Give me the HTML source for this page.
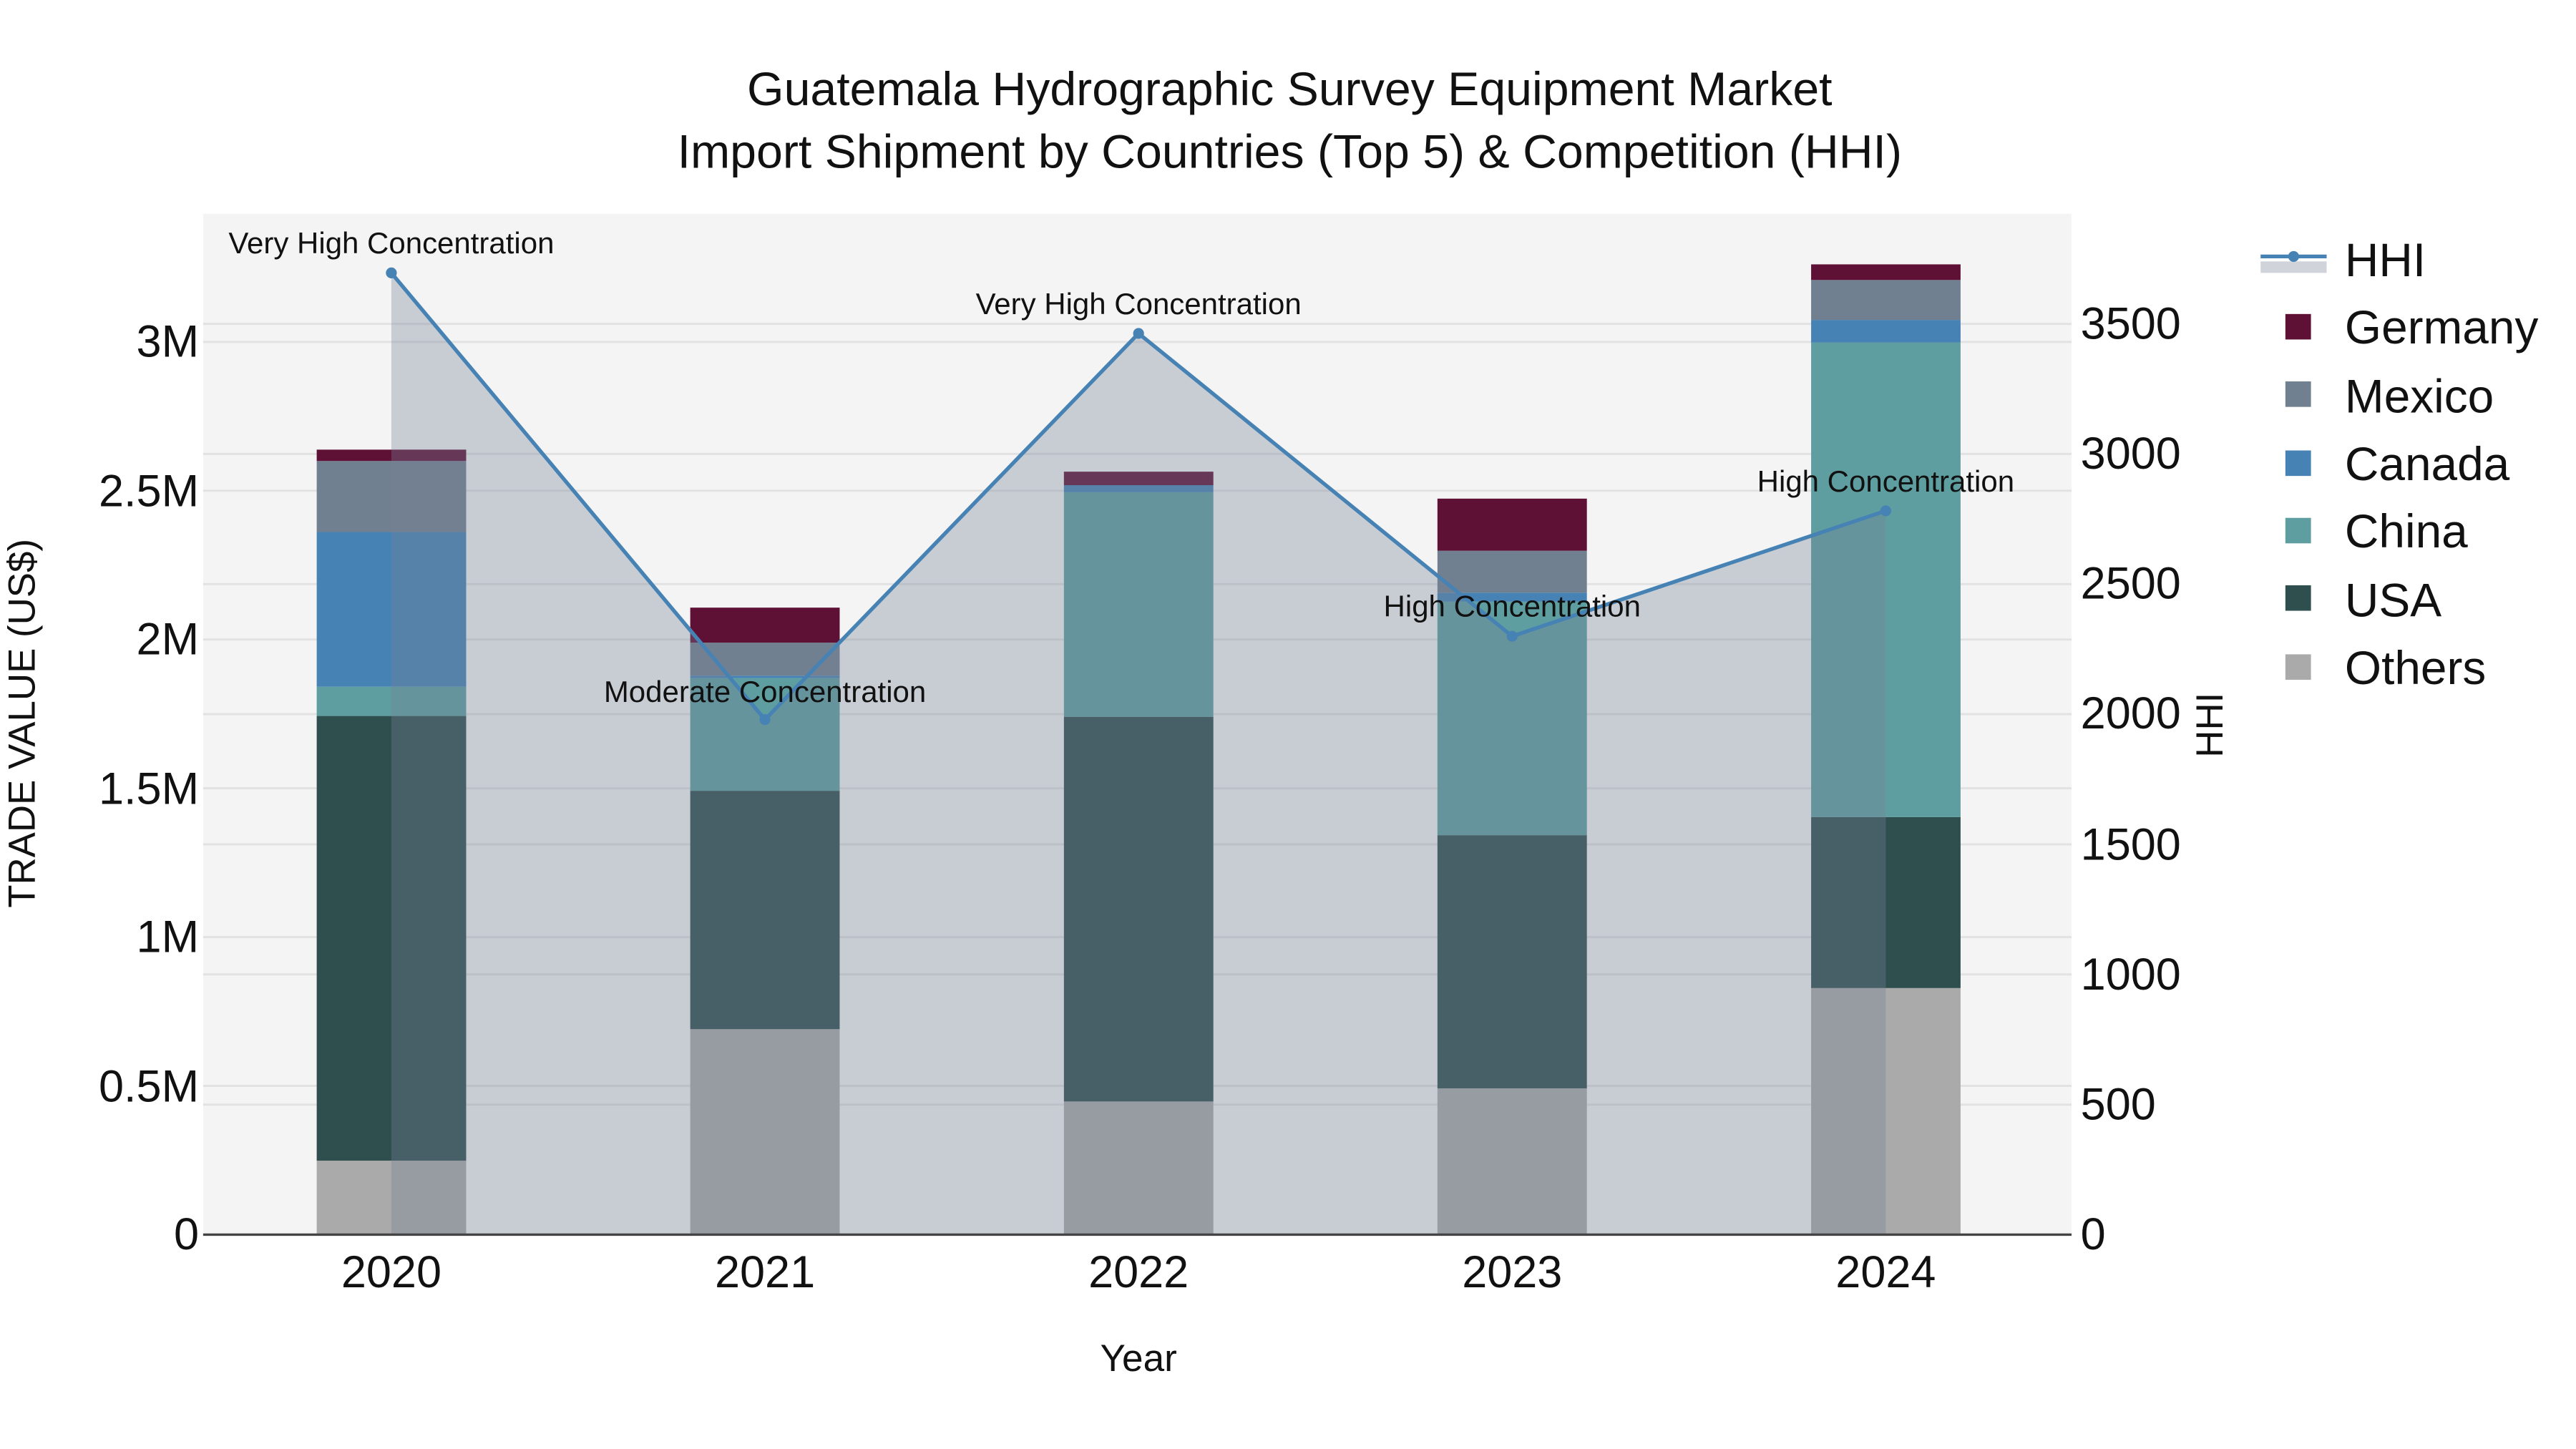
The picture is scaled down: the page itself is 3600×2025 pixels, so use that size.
<!DOCTYPE html>
<html><head><meta charset="utf-8"><style>
html,body{margin:0;padding:0;background:#fff;}
svg{display:block;}
text{font-family:"Liberation Sans",Arial,sans-serif;fill:#111;}
</style></head><body>
<svg width="3600" height="2025" viewBox="0 0 1560 877.5" xmlns="http://www.w3.org/2000/svg">
<rect x="0" y="0" width="1560" height="877.5" fill="#fff"/>
<g transform="scale(1,0.9956)">
<rect x="123" y="130" width="1131.5" height="621" fill="#f4f4f4"/>
<g stroke="#e2e2e2" stroke-width="1.3">
<line x1="123" x2="1254.5" y1="660.5" y2="660.5"/>
<line x1="123" x2="1254.5" y1="570" y2="570"/>
<line x1="123" x2="1254.5" y1="479.5" y2="479.5"/>
<line x1="123" x2="1254.5" y1="389" y2="389"/>
<line x1="123" x2="1254.5" y1="298.5" y2="298.5"/>
<line x1="123" x2="1254.5" y1="208" y2="208"/>
<line x1="123" x2="1254.5" y1="671.9" y2="671.9"/>
<line x1="123" x2="1254.5" y1="592.7" y2="592.7"/>
<line x1="123" x2="1254.5" y1="513.6" y2="513.6"/>
<line x1="123" x2="1254.5" y1="434.4" y2="434.4"/>
<line x1="123" x2="1254.5" y1="355.3" y2="355.3"/>
<line x1="123" x2="1254.5" y1="276.1" y2="276.1"/>
<line x1="123" x2="1254.5" y1="197" y2="197"/>
</g>
<g>
<rect x="191.8" y="706" width="90.5" height="45" fill="#aaaaaa"/>
<rect x="191.8" y="435.5" width="90.5" height="270.5" fill="#2f4f4f"/>
<rect x="191.8" y="417.7" width="90.5" height="17.8" fill="#5f9ea0"/>
<rect x="191.8" y="323.6" width="90.5" height="94.1" fill="#4682b4"/>
<rect x="191.8" y="280.4" width="90.5" height="43.2" fill="#708090"/>
<rect x="191.8" y="273.5" width="90.5" height="6.9" fill="#5f1035"/>
<rect x="418" y="626" width="90.5" height="125" fill="#aaaaaa"/>
<rect x="418" y="481" width="90.5" height="145" fill="#2f4f4f"/>
<rect x="418" y="412.5" width="90.5" height="68.5" fill="#5f9ea0"/>
<rect x="418" y="411" width="90.5" height="1.5" fill="#4682b4"/>
<rect x="418" y="390.9" width="90.5" height="20.1" fill="#708090"/>
<rect x="418" y="369.6" width="90.5" height="21.3" fill="#5f1035"/>
<rect x="644.3" y="670" width="90.5" height="81" fill="#aaaaaa"/>
<rect x="644.3" y="436" width="90.5" height="234" fill="#2f4f4f"/>
<rect x="644.3" y="299.4" width="90.5" height="136.6" fill="#5f9ea0"/>
<rect x="644.3" y="295.1" width="90.5" height="4.3" fill="#4682b4"/>
<rect x="644.3" y="286.9" width="90.5" height="8.2" fill="#5f1035"/>
<rect x="870.5" y="662" width="90.5" height="89" fill="#aaaaaa"/>
<rect x="870.5" y="508" width="90.5" height="154" fill="#2f4f4f"/>
<rect x="870.5" y="366" width="90.5" height="142" fill="#5f9ea0"/>
<rect x="870.5" y="360.5" width="90.5" height="5.5" fill="#4682b4"/>
<rect x="870.5" y="335" width="90.5" height="25.5" fill="#708090"/>
<rect x="870.5" y="303.3" width="90.5" height="31.7" fill="#5f1035"/>
<rect x="1096.8" y="601" width="90.5" height="150" fill="#aaaaaa"/>
<rect x="1096.8" y="497" width="90.5" height="104" fill="#2f4f4f"/>
<rect x="1096.8" y="208.4" width="90.5" height="288.6" fill="#5f9ea0"/>
<rect x="1096.8" y="194.6" width="90.5" height="13.8" fill="#4682b4"/>
<rect x="1096.8" y="170.3" width="90.5" height="24.3" fill="#708090"/>
<rect x="1096.8" y="160.8" width="90.5" height="9.5" fill="#5f1035"/>
</g>
<polygon points="237,166 463.25,437.7 689.5,202.8 915.75,387 1142,310.7 1142,751 237,751" fill="rgb(118,129,150)" fill-opacity="0.35"/>
<polyline points="237,166 463.25,437.7 689.5,202.8 915.75,387 1142,310.7" fill="none" stroke="#4682b4" stroke-width="2.3"/>
<g fill="#4682b4">
<circle cx="237" cy="166" r="3.3"/><circle cx="463.25" cy="437.7" r="3.3"/><circle cx="689.5" cy="202.8" r="3.3"/><circle cx="915.75" cy="387" r="3.3"/><circle cx="1142" cy="310.7" r="3.3"/>
</g>
<line x1="123" x2="1254.5" y1="751" y2="751" stroke="#444" stroke-width="1.5"/>
<g font-size="18.2" text-anchor="middle">
<text x="237" y="154">Very High Concentration</text>
<text x="463.25" y="427">Moderate Concentration</text>
<text x="689.5" y="191">Very High Concentration</text>
<text x="915.75" y="375">High Concentration</text>
<text x="1142" y="299">High Concentration</text>
</g>
<g font-size="28.7" text-anchor="middle">
<text x="781" y="64">Guatemala Hydrographic Survey Equipment Market</text>
<text x="781" y="102">Import Shipment by Countries (Top 5) &amp; Competition (HHI)</text>
</g>
<g font-size="27.3" text-anchor="end">
<text x="120.5" y="760">0</text>
<text x="120.5" y="670">0.5M</text>
<text x="120.5" y="579">1M</text>
<text x="120.5" y="489">1.5M</text>
<text x="120.5" y="398">2M</text>
<text x="120.5" y="308">2.5M</text>
<text x="120.5" y="217">3M</text>
</g>
<g font-size="27.3" text-anchor="start">
<text x="1260" y="760">0</text>
<text x="1260" y="681">500</text>
<text x="1260" y="602">1000</text>
<text x="1260" y="523">1500</text>
<text x="1260" y="443">2000</text>
<text x="1260" y="364">2500</text>
<text x="1260" y="285">3000</text>
<text x="1260" y="206">3500</text>
</g>
<g font-size="27.3" text-anchor="middle">
<text x="237" y="783">2020</text>
<text x="463.25" y="783">2021</text>
<text x="689.5" y="783">2022</text>
<text x="915.75" y="783">2023</text>
<text x="1142" y="783">2024</text>
</g>
<text x="689.5" y="834" font-size="23" text-anchor="middle">Year</text>
<text transform="translate(21,440) rotate(-90)" font-size="23" text-anchor="middle">TRADE VALUE (US$)</text>
<text transform="translate(1346,441) rotate(-90)" font-size="23" text-anchor="middle">HHI</text>
<rect x="1369" y="159" width="40" height="7" fill="#d0d4da"/>
<line x1="1369" x2="1409" y1="156" y2="156" stroke="#4682b4" stroke-width="2.3"/>
<circle cx="1389" cy="156" r="3.3" fill="#4682b4"/>
<g font-size="28.5">
<text x="1420" y="168">HHI</text>
<text x="1420" y="209">Germany</text>
<text x="1420" y="251">Mexico</text>
<text x="1420" y="292">Canada</text>
<text x="1420" y="333">China</text>
<text x="1420" y="375">USA</text>
<text x="1420" y="416">Others</text>
</g>
<rect x="1384" y="191" width="15.5" height="15.5" fill="#5f1035"/>
<rect x="1384" y="232" width="15.5" height="15.5" fill="#708090"/>
<rect x="1384" y="274" width="15.5" height="15.5" fill="#4682b4"/>
<rect x="1384" y="315" width="15.5" height="15.5" fill="#5f9ea0"/>
<rect x="1384" y="356" width="15.5" height="15.5" fill="#2f4f4f"/>
<rect x="1384" y="398" width="15.5" height="15.5" fill="#aaaaaa"/>
</g>
</svg>
</body></html>
